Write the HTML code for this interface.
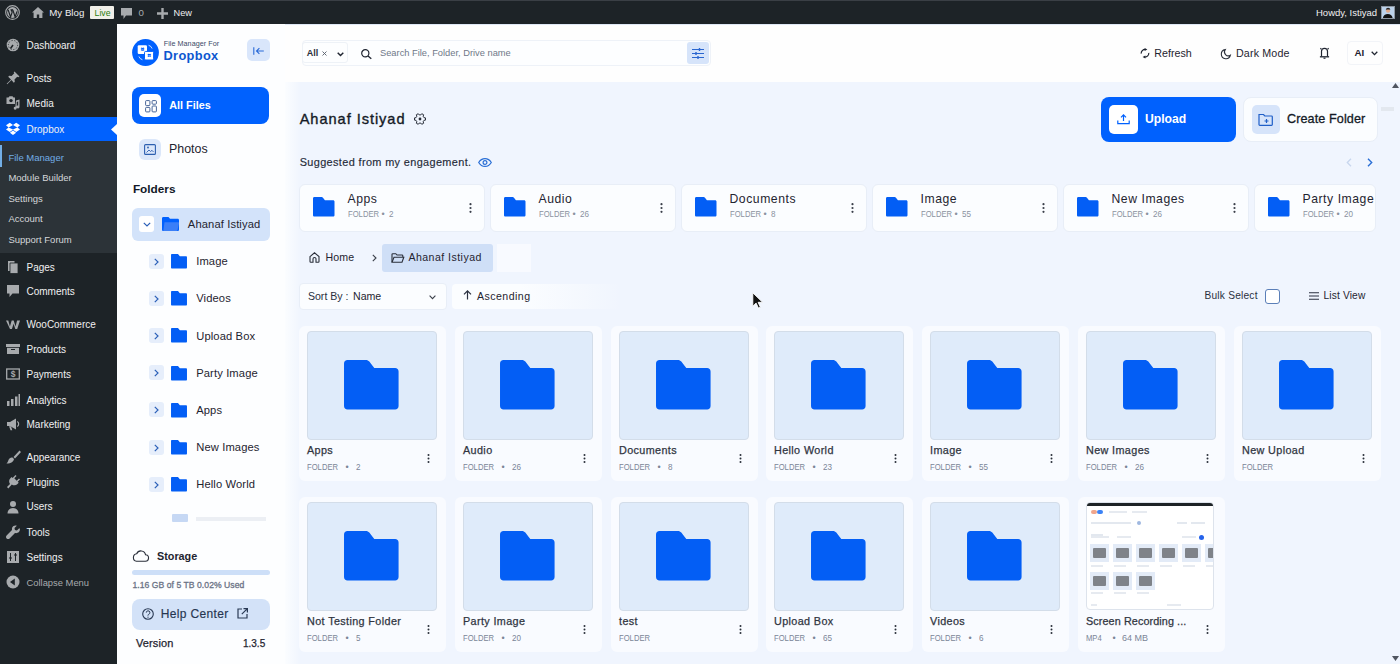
<!DOCTYPE html>
<html><head><meta charset="utf-8"><title>File Manager for Dropbox</title>
<style>
*{box-sizing:border-box;margin:0;padding:0}
html,body{width:1400px;height:664px;overflow:hidden}
body{font-family:"Liberation Sans",sans-serif;background:#eff5fe;position:relative}
.a{position:absolute}
.t{position:absolute;white-space:nowrap}
svg.a{overflow:visible}
</style></head><body>
<div class="a" style="left:0px;top:0px;width:1400px;height:24px;background:#1d2327"></div>
<div class="a" style="left:0px;top:0px;width:1400px;height:1px;background:#3a3f45"></div>
<div class="a" style="left:0px;top:24px;width:117px;height:640px;background:#1d2327"></div>
<div class="a" style="left:117px;top:24px;width:168px;height:640px;background:#fdfeff"></div>
<div class="a" style="left:285px;top:24px;width:1115px;height:58px;background:#fefefe"></div>
<div class="a" style="left:285px;top:82px;width:1115px;height:582px;background:#f0f5fe"></div>
<div class="a" style="left:285px;top:82px;width:16px;height:582px;background:linear-gradient(90deg,#fbfdff,rgba(239,245,254,0))"></div>
<svg class="a" style="left:5px;top:5px;" width="15" height="15" viewBox="0 0 20 20"><circle cx="10" cy="10" r="9.1" fill="none" stroke="#a7aaad" stroke-width="1.5"/><circle cx="10" cy="10" r="7.2" fill="#a7aaad"/><path d="M4.2 6.5l3.2 9.3 2.1-6-1-3.3M7.3 6.5h3.4M10.4 6.5l3.1 9.3 2.6-7.3" fill="none" stroke="#1d2327" stroke-width="1.6"/></svg>
<svg class="a" style="left:32px;top:7px;" width="12" height="11" viewBox="0 0 12 11"><path d="M6 0L0 5.5h1.6V11h3.2V7.5h2.4V11h3.2V5.5H12z" fill="#a7aaad"/></svg>
<div class="t" style="left:49.3px;top:6.82px;font-size:9.7px;line-height:11.64px;color:#f0f0f1;font-weight:400;">My Blog</div>
<div class="a" style="left:90px;top:6px;width:24px;height:13px;background:#f1f0e9;border-radius:1px"></div>
<div class="t" style="left:94.6px;top:7.77px;font-size:8.7px;line-height:10.44px;color:#2b7d10;font-weight:400;">Live</div>
<svg class="a" style="left:121px;top:8px;" width="11" height="11" viewBox="0 0 11 11"><path d="M0 0h11v7.5H5L2.5 11V7.5H0z" fill="#a7aaad"/></svg>
<div class="t" style="left:138.6px;top:6.82px;font-size:9.7px;line-height:11.64px;color:#a7aaad;font-weight:400;">0</div>
<svg class="a" style="left:157px;top:8px;" width="11" height="11" viewBox="0 0 11 11"><path d="M4.3 0h2.4v4.3H11v2.4H6.7V11H4.3V6.7H0V4.3h4.3z" fill="#a7aaad"/></svg>
<div class="t" style="left:173.6px;top:7.89px;font-size:9.2px;line-height:11.04px;color:#f0f0f1;font-weight:400;">New</div>
<div class="t" style="left:1316px;top:7.01px;font-size:9.5px;line-height:11.4px;color:#f0f0f1;font-weight:400;">Howdy, Istiyad</div>
<div class="a" style="left:1381px;top:6px;width:13.5px;height:13px;background:#bcd2ea;border:1px solid #8d96a0"></div>
<svg class="a" style="left:1382px;top:7px;" width="11.5" height="11" viewBox="0 0 12 12"><circle cx="6.3" cy="4" r="2.3" fill="#e0a98a"/><path d="M3.9 3.6c0-2 1.2-2.8 2.5-2.8s2.4.9 2.3 2.6L8 2.6 4.6 2.7z" fill="#222"/><path d="M.7 12c.4-3 2.6-4.3 5.3-4.3s4.9 1.3 5.3 4.3z" fill="#111"/></svg>
<div class="a" style="left:0px;top:117px;width:117px;height:24px;background:#0061fe"></div>
<div class="a" style="left:0px;top:141px;width:117px;height:112px;background:#2c3338"></div>
<div class="a" style="left:0px;top:145px;width:2px;height:22px;background:#72aee6"></div>
<svg class="a" style="left:111px;top:123.5px;" width="6" height="11" viewBox="0 0 6 11"><path d="M6 0L0 5.5 6 11z" fill="#fdfeff"/></svg>
<div class="t" style="left:26.5px;top:39.94px;font-size:10px;line-height:12.0px;color:#f0f0f1;font-weight:400;">Dashboard</div>
<div class="t" style="left:26.5px;top:72.94px;font-size:10px;line-height:12.0px;color:#f0f0f1;font-weight:400;">Posts</div>
<div class="t" style="left:26.5px;top:97.94px;font-size:10px;line-height:12.0px;color:#f0f0f1;font-weight:400;">Media</div>
<div class="t" style="left:26.5px;top:124.44px;font-size:10px;line-height:12.0px;color:#f0f0f1;font-weight:400;">Dropbox</div>
<div class="t" style="left:26.5px;top:261.94px;font-size:10px;line-height:12.0px;color:#f0f0f1;font-weight:400;">Pages</div>
<div class="t" style="left:26.5px;top:285.94px;font-size:10px;line-height:12.0px;color:#f0f0f1;font-weight:400;">Comments</div>
<div class="t" style="left:26.5px;top:318.94px;font-size:10px;line-height:12.0px;color:#f0f0f1;font-weight:400;">WooCommerce</div>
<div class="t" style="left:26.5px;top:343.94px;font-size:10px;line-height:12.0px;color:#f0f0f1;font-weight:400;">Products</div>
<div class="t" style="left:26.5px;top:368.94px;font-size:10px;line-height:12.0px;color:#f0f0f1;font-weight:400;">Payments</div>
<div class="t" style="left:26.5px;top:394.63px;font-size:10px;line-height:12.0px;color:#f0f0f1;font-weight:400;">Analytics</div>
<div class="t" style="left:26.5px;top:418.94px;font-size:10px;line-height:12.0px;color:#f0f0f1;font-weight:400;">Marketing</div>
<div class="t" style="left:26.5px;top:451.94px;font-size:10px;line-height:12.0px;color:#f0f0f1;font-weight:400;">Appearance</div>
<div class="t" style="left:26.5px;top:476.63px;font-size:10px;line-height:12.0px;color:#f0f0f1;font-weight:400;">Plugins</div>
<div class="t" style="left:26.5px;top:501.44px;font-size:10px;line-height:12.0px;color:#f0f0f1;font-weight:400;">Users</div>
<div class="t" style="left:26.5px;top:526.93px;font-size:10px;line-height:12.0px;color:#f0f0f1;font-weight:400;">Tools</div>
<div class="t" style="left:26.5px;top:551.93px;font-size:10px;line-height:12.0px;color:#f0f0f1;font-weight:400;">Settings</div>
<div class="t" style="left:26.5px;top:577.20px;font-size:9.4px;line-height:11.28px;color:#a7aaad;font-weight:400;">Collapse Menu</div>
<div class="t" style="left:8.4px;top:151.91px;font-size:9.5px;line-height:11.4px;color:#72aee6;font-weight:400;">File Manager</div>
<div class="t" style="left:8.4px;top:172.41px;font-size:9.5px;line-height:11.4px;color:#d4d7da;font-weight:400;">Module Builder</div>
<div class="t" style="left:8.4px;top:192.91px;font-size:9.5px;line-height:11.4px;color:#d4d7da;font-weight:400;">Settings</div>
<div class="t" style="left:8.4px;top:212.91px;font-size:9.5px;line-height:11.4px;color:#d4d7da;font-weight:400;">Account</div>
<div class="t" style="left:8.4px;top:233.91px;font-size:9.5px;line-height:11.4px;color:#d4d7da;font-weight:400;">Support Forum</div>
<svg class="a" style="left:6px;top:38px;" width="14" height="14" viewBox="0 0 14 14"><circle cx="7" cy="7" r="6.3" fill="#a7aaad"/><circle cx="7" cy="7" r="4.6" fill="none" stroke="#1d2327" stroke-width=".8" stroke-dasharray="1.2 1.6"/><path d="M7 7L4.5 10.5" stroke="#1d2327" stroke-width="1.5"/></svg>
<svg class="a" style="left:6px;top:71px;" width="14" height="14" viewBox="0 0 14 14"><path d="M8.5 0.5l5 5-1.3.8-1-.6-2.7 2.7.3 2.4-1 1L5.5 9 1.2 13.3.7 12.8 5 8.5 2.2 5.7l1-1 2.4.3 2.7-2.7-.6-1z" fill="#a7aaad"/></svg>
<svg class="a" style="left:6px;top:96px;" width="14" height="14" viewBox="0 0 14 14"><path d="M0.5 1.5h2l1-1.2h3l1 1.2h1.5v6.5H.5z" fill="#a7aaad"/><circle cx="5" cy="4.6" r="1.7" fill="#1d2327"/><path d="M10 4.5l3.5-1v7.5a1.5 1.5 0 1 1-1.3-1.5V5.6l-1.5.4v6.2a1.5 1.5 0 1 1-1.3-1.5z" fill="#a7aaad"/></svg>
<svg class="a" style="left:6px;top:122px;" width="14" height="14" viewBox="0 0 14 14"><path d="M3.8 .8L0 3.3l2.6 2.1L0 7.5l3.8 2.5L7 7.8l3.2 2.2L14 7.5l-2.6-2.1L14 3.3 10.2.8 7 3zM7 3.1l4.3 2.3L7 7.6 2.7 5.4zM3.9 10.7L7 12.9l3.1-2.2L7 8.6z" fill="#fff"/></svg>
<svg class="a" style="left:6px;top:260px;" width="14" height="14" viewBox="0 0 14 14"><path d="M2 1h6.5v10H2z" fill="#a7aaad"/><path d="M4 3h8v10.5H4z" fill="#a7aaad" stroke="#1d2327" stroke-width=".8"/></svg>
<svg class="a" style="left:6px;top:284px;" width="14" height="14" viewBox="0 0 14 14"><path d="M1 1h12v8.5H6.5L3.5 13V9.5H1z" fill="#a7aaad"/></svg>
<svg class="a" style="left:6px;top:317px;" width="14" height="14" viewBox="0 0 14 14"><path d="M0 3.5h2.3l1.6 6 1.8-6h2l1.8 6 1.6-6H14l-2.8 8.5H9.3L7.6 6.8 5.9 12H4z" fill="#a7aaad"/></svg>
<svg class="a" style="left:6px;top:342px;" width="14" height="14" viewBox="0 0 14 14"><path d="M0 2h14v3H0z" fill="#a7aaad"/><path d="M1 5.8h12V12H1z" fill="#a7aaad"/><path d="M5 7.5h4" stroke="#1d2327" stroke-width="1"/></svg>
<svg class="a" style="left:6px;top:367px;" width="14" height="14" viewBox="0 0 14 14"><rect x=".7" y="2" width="12.6" height="10" fill="none" stroke="#a7aaad" stroke-width="1.3"/><text x="7" y="10.3" font-size="8.5" font-weight="bold" text-anchor="middle" fill="#a7aaad" font-family="Liberation Sans">$</text></svg>
<svg class="a" style="left:6px;top:393px;" width="14" height="14" viewBox="0 0 14 14"><path d="M1 8h2.5v5H1zM5 6h2.5v7H5zM9 3.5h2.5V13H9zM12.5 1H14v12h-1.5z" fill="#a7aaad"/></svg>
<svg class="a" style="left:6px;top:417px;" width="14" height="14" viewBox="0 0 14 14"><path d="M1 5h3l6-3.5v11L4 9H1z" fill="#a7aaad"/><path d="M3 9.3l1.5 4h1.8L5 9.3z" fill="#a7aaad"/><path d="M11.3 4.5a3 3 0 0 1 0 5" stroke="#a7aaad" fill="none" stroke-width="1.2"/></svg>
<svg class="a" style="left:6px;top:450px;" width="14" height="14" viewBox="0 0 14 14"><path d="M13.5.5l-6 6.5 1.5 1.5 6-6.5zM6.5 7.5l1.5 1.5c-.5 2.5-2.5 4.5-7.5 4.5 1.5-1 1.5-3 2.5-4.5 1-1.2 2.5-1.5 3.5-1.5z" fill="#a7aaad"/></svg>
<svg class="a" style="left:6px;top:475px;" width="14" height="14" viewBox="0 0 14 14"><path d="M9.5 0l1 1-2.2 2.3 2.4 2.4 2.3-2.2 1 1-2.3 2.3 1 1-1.2 1.2c-1.6 1.6-4 1.7-5.7.4L2.3 13.4 1 12.1l3-3.1C2.7 7.3 2.8 4.9 4.4 3.3L5.6 2.1l1 1z" fill="#a7aaad"/></svg>
<svg class="a" style="left:6px;top:500px;" width="14" height="14" viewBox="0 0 14 14"><circle cx="7" cy="4" r="3" fill="#a7aaad"/><path d="M1.5 13.5c0-3.5 2.5-5.5 5.5-5.5s5.5 2 5.5 5.5z" fill="#a7aaad"/></svg>
<svg class="a" style="left:6px;top:525px;" width="14" height="14" viewBox="0 0 14 14"><path d="M13.2 3.2l-2.3 2.2-2-.4-.4-2L10.8.8C9 0 7 .8 6.2 2.6c-.3.8-.4 1.6-.2 2.4L.6 10.4c-.8.8-.8 2.2 0 3s2.2.8 3 0L9 8c2.7.7 5.3-1.5 4.9-4.3z" fill="#a7aaad"/></svg>
<svg class="a" style="left:6px;top:550px;" width="14" height="14" viewBox="0 0 14 14"><rect x="1" y="1" width="12" height="12" fill="#a7aaad"/><path d="M4.5 3v8M9.5 3v8" stroke="#1d2327" stroke-width="1"/><path d="M3.3 8h2.4M8.3 5h2.4" stroke="#1d2327" stroke-width="1.6"/></svg>
<svg class="a" style="left:6px;top:575px;" width="14" height="14" viewBox="0 0 14 14"><circle cx="7" cy="7" r="6.5" fill="#a7aaad"/><path d="M8.8 3.5v7L4 7z" fill="#1d2327"/></svg>
<svg class="a" style="left:132px;top:39px;" width="27" height="27" viewBox="0 0 27 27"><circle cx="13.5" cy="13.5" r="13.4" fill="#0061fe"/><rect x="5.7" y="6.2" width="9.3" height="8.8" rx="1.2" fill="#fff"/><rect x="12.5" y="12.4" width="9.1" height="8.6" rx="1.2" fill="#fff" stroke="#0061fe" stroke-width="1"/><path d="M8.6 9.3l1.2-.8 1.2.8-1.2.8zM10.2 9.3l1.2-.8 1.2.8-1.2.8zM8.6 10.9l1.2-.8 1.2.8-1.2.8zM10.2 10.9l1.2-.8 1.2.8-1.2.8z" fill="#0061fe"/><path d="M15.3 15.5l1.2-.8 1.2.8-1.2.8zM16.9 15.5l1.2-.8 1.2.8-1.2.8zM15.3 17.1l1.2-.8 1.2.8-1.2.8zM16.9 17.1l1.2-.8 1.2.8-1.2.8z" fill="#0061fe"/><path d="M16.6 6.3a5 5 0 0 1 3.5 3.2M10.4 20.7a5 5 0 0 1-3.5-3.2" stroke="#fff" stroke-width=".8" fill="none"/></svg>
<div class="t" style="left:163.7px;top:39.59px;font-size:7.2px;line-height:8.64px;color:#3b4a66;font-weight:400;letter-spacing:0.05px;">File Manager For</div>
<div class="t" style="left:163.5px;top:48.28px;font-size:12.8px;line-height:15.36px;color:#0d57d0;font-weight:700;letter-spacing:0.35px;">Dropbox</div>
<div class="a" style="left:247px;top:39px;width:23px;height:22px;background:#d9e6fb;border-radius:5px"></div>
<svg class="a" style="left:253px;top:46.5px;" width="11" height="8" viewBox="0 0 11 8"><path d="M.8 .3v7.4" stroke="#2a6ad8" stroke-width="1.1"/><path d="M10.8 4H3.5M6.4 1.1L3.5 4l2.9 2.9" stroke="#2a6ad8" stroke-width="1.1" fill="none"/></svg>
<div class="a" style="left:132px;top:87px;width:137px;height:37px;background:#0061fe;border-radius:8px"></div>
<div class="a" style="left:139px;top:94px;width:22px;height:23px;background:#fff;border-radius:5px"></div>
<svg class="a" style="left:144.5px;top:99.5px;" width="12" height="12.5" viewBox="0 0 12 12.5"><rect x=".6" y=".6" width="4.3" height="5" rx=".8" fill="none" stroke="#34558c" stroke-width=".9"/><rect x="7.1" y=".6" width="4.3" height="3.6" rx=".8" fill="none" stroke="#34558c" stroke-width=".9"/><rect x=".6" y="7.4" width="4.3" height="4.5" rx=".8" fill="none" stroke="#34558c" stroke-width=".9"/><rect x="7.1" y="6" width="4.3" height="5.9" rx=".8" fill="none" stroke="#34558c" stroke-width=".9"/></svg>
<div class="t" style="left:169.3px;top:99.38px;font-size:10.8px;line-height:12.96px;color:#ffffff;font-weight:700;">All Files</div>
<div class="a" style="left:139px;top:139px;width:22px;height:21px;background:#dbe7fa;border-radius:6px"></div>
<svg class="a" style="left:144px;top:144px;" width="12" height="11" viewBox="0 0 12 11"><rect x=".6" y=".6" width="10.8" height="9.8" rx="1" fill="none" stroke="#2c5fb0" stroke-width="1.1"/><path d="M2.5 8.5l2.5-2.5 1.5 1.5 1.5-1.2 1.5 1.7" stroke="#2c5fb0" stroke-width=".9" fill="none"/><circle cx="4" cy="3.5" r=".9" fill="#2c5fb0"/></svg>
<div class="t" style="left:169px;top:141.96px;font-size:12.4px;line-height:14.88px;color:#1f2430;font-weight:400;">Photos</div>
<div class="t" style="left:132.9px;top:181.63px;font-size:11.8px;line-height:14.16px;color:#111827;font-weight:700;">Folders</div>
<div class="a" style="left:132px;top:208px;width:138px;height:33px;background:#d3e3fa;border-radius:6px"></div>
<div class="a" style="left:139px;top:216px;width:15px;height:16px;background:#fff;border-radius:3px"></div>
<svg class="a" style="left:142.5px;top:221.5px;" width="8" height="5" viewBox="0 0 8 5"><path d="M.8 .8L4 4l3.2-3.2" stroke="#2a5fb8" stroke-width="1.2" fill="none"/></svg>
<svg class="a" style="left:161.8px;top:217px;" width="17" height="14" viewBox="0 0 17 14"><path d="M1.3 0H6.5L8 1.8H15.7C16.4 1.8 17 2.4 17 3.1V12.7C17 13.4 16.4 14 15.7 14H1.3C.6 14 0 13.4 0 12.7V1.3C0 .6.6 0 1.3 0Z" fill="#0061fe"/><path d="M2.5 5.3H16.2C16.8 5.3 17.2 5.8 17 6.4L15.5 13.2C15.4 13.7 15 14 14.5 14H1.3" fill="#3b7ff7"/></svg>
<div class="t" style="left:187.8px;top:217.70px;font-size:11.2px;line-height:13.44px;color:#1f2430;font-weight:400;letter-spacing:0.12px;">Ahanaf Istiyad</div>
<div class="a" style="left:148.5px;top:254px;width:15px;height:15px;background:#e6eefb;border-radius:3px"></div>
<svg class="a" style="left:153.5px;top:258px;" width="5" height="8" viewBox="0 0 5 8"><path d="M.8 .8L4 4 .8 7.2" stroke="#2a5fb8" stroke-width="1.2" fill="none"/></svg>
<svg class="a" style="left:171.3px;top:254.0px;" width="16" height="14.5" viewBox="0 0 55 50"><path d="M3.5 0H22C23.5 0 24.5 .6 25.5 1.6L30.5 8H51.5C53.5 8 55 9.5 55 11.5V46.5C55 48.5 53.5 50 51.5 50H3.5C1.5 50 0 48.5 0 46.5V3.5C0 1.5 1.5 0 3.5 0Z" fill="#035ef5"/></svg>
<div class="t" style="left:196.2px;top:255.10px;font-size:11.2px;line-height:13.44px;color:#1f2430;font-weight:400;letter-spacing:0.12px;">Image</div>
<div class="a" style="left:148.5px;top:291px;width:15px;height:15px;background:#e6eefb;border-radius:3px"></div>
<svg class="a" style="left:153.5px;top:295px;" width="5" height="8" viewBox="0 0 5 8"><path d="M.8 .8L4 4 .8 7.2" stroke="#2a5fb8" stroke-width="1.2" fill="none"/></svg>
<svg class="a" style="left:171.3px;top:291.2px;" width="16" height="14.5" viewBox="0 0 55 50"><path d="M3.5 0H22C23.5 0 24.5 .6 25.5 1.6L30.5 8H51.5C53.5 8 55 9.5 55 11.5V46.5C55 48.5 53.5 50 51.5 50H3.5C1.5 50 0 48.5 0 46.5V3.5C0 1.5 1.5 0 3.5 0Z" fill="#035ef5"/></svg>
<div class="t" style="left:196.2px;top:292.30px;font-size:11.2px;line-height:13.44px;color:#1f2430;font-weight:400;letter-spacing:0.12px;">Videos</div>
<div class="a" style="left:148.5px;top:328px;width:15px;height:15px;background:#e6eefb;border-radius:3px"></div>
<svg class="a" style="left:153.5px;top:332px;" width="5" height="8" viewBox="0 0 5 8"><path d="M.8 .8L4 4 .8 7.2" stroke="#2a5fb8" stroke-width="1.2" fill="none"/></svg>
<svg class="a" style="left:171.3px;top:328.4px;" width="16" height="14.5" viewBox="0 0 55 50"><path d="M3.5 0H22C23.5 0 24.5 .6 25.5 1.6L30.5 8H51.5C53.5 8 55 9.5 55 11.5V46.5C55 48.5 53.5 50 51.5 50H3.5C1.5 50 0 48.5 0 46.5V3.5C0 1.5 1.5 0 3.5 0Z" fill="#035ef5"/></svg>
<div class="t" style="left:196.2px;top:329.50px;font-size:11.2px;line-height:13.44px;color:#1f2430;font-weight:400;letter-spacing:0.12px;">Upload Box</div>
<div class="a" style="left:148.5px;top:365px;width:15px;height:15px;background:#e6eefb;border-radius:3px"></div>
<svg class="a" style="left:153.5px;top:369px;" width="5" height="8" viewBox="0 0 5 8"><path d="M.8 .8L4 4 .8 7.2" stroke="#2a5fb8" stroke-width="1.2" fill="none"/></svg>
<svg class="a" style="left:171.3px;top:365.6px;" width="16" height="14.5" viewBox="0 0 55 50"><path d="M3.5 0H22C23.5 0 24.5 .6 25.5 1.6L30.5 8H51.5C53.5 8 55 9.5 55 11.5V46.5C55 48.5 53.5 50 51.5 50H3.5C1.5 50 0 48.5 0 46.5V3.5C0 1.5 1.5 0 3.5 0Z" fill="#035ef5"/></svg>
<div class="t" style="left:196.2px;top:366.70px;font-size:11.2px;line-height:13.44px;color:#1f2430;font-weight:400;letter-spacing:0.12px;">Party Image</div>
<div class="a" style="left:148.5px;top:402px;width:15px;height:15px;background:#e6eefb;border-radius:3px"></div>
<svg class="a" style="left:153.5px;top:406px;" width="5" height="8" viewBox="0 0 5 8"><path d="M.8 .8L4 4 .8 7.2" stroke="#2a5fb8" stroke-width="1.2" fill="none"/></svg>
<svg class="a" style="left:171.3px;top:402.8px;" width="16" height="14.5" viewBox="0 0 55 50"><path d="M3.5 0H22C23.5 0 24.5 .6 25.5 1.6L30.5 8H51.5C53.5 8 55 9.5 55 11.5V46.5C55 48.5 53.5 50 51.5 50H3.5C1.5 50 0 48.5 0 46.5V3.5C0 1.5 1.5 0 3.5 0Z" fill="#035ef5"/></svg>
<div class="t" style="left:196.2px;top:403.90px;font-size:11.2px;line-height:13.44px;color:#1f2430;font-weight:400;letter-spacing:0.12px;">Apps</div>
<div class="a" style="left:148.5px;top:440px;width:15px;height:15px;background:#e6eefb;border-radius:3px"></div>
<svg class="a" style="left:153.5px;top:444px;" width="5" height="8" viewBox="0 0 5 8"><path d="M.8 .8L4 4 .8 7.2" stroke="#2a5fb8" stroke-width="1.2" fill="none"/></svg>
<svg class="a" style="left:171.3px;top:440.0px;" width="16" height="14.5" viewBox="0 0 55 50"><path d="M3.5 0H22C23.5 0 24.5 .6 25.5 1.6L30.5 8H51.5C53.5 8 55 9.5 55 11.5V46.5C55 48.5 53.5 50 51.5 50H3.5C1.5 50 0 48.5 0 46.5V3.5C0 1.5 1.5 0 3.5 0Z" fill="#035ef5"/></svg>
<div class="t" style="left:196.2px;top:441.10px;font-size:11.2px;line-height:13.44px;color:#1f2430;font-weight:400;letter-spacing:0.12px;">New Images</div>
<div class="a" style="left:148.5px;top:477px;width:15px;height:15px;background:#e6eefb;border-radius:3px"></div>
<svg class="a" style="left:153.5px;top:481px;" width="5" height="8" viewBox="0 0 5 8"><path d="M.8 .8L4 4 .8 7.2" stroke="#2a5fb8" stroke-width="1.2" fill="none"/></svg>
<svg class="a" style="left:171.3px;top:477.20000000000005px;" width="16" height="14.5" viewBox="0 0 55 50"><path d="M3.5 0H22C23.5 0 24.5 .6 25.5 1.6L30.5 8H51.5C53.5 8 55 9.5 55 11.5V46.5C55 48.5 53.5 50 51.5 50H3.5C1.5 50 0 48.5 0 46.5V3.5C0 1.5 1.5 0 3.5 0Z" fill="#035ef5"/></svg>
<div class="t" style="left:196.2px;top:478.30px;font-size:11.2px;line-height:13.44px;color:#1f2430;font-weight:400;letter-spacing:0.12px;">Hello World</div>
<div class="a" style="left:172px;top:513.5px;width:16px;height:8.5px;background:#c6d8f4;border-radius:1px"></div>
<div class="a" style="left:196px;top:517px;width:70px;height:4px;background:#eceff4"></div>
<svg class="a" style="left:132px;top:550px;" width="17" height="12" viewBox="0 0 17 12"><path d="M4.5 11.3h8.5a3.3 3.3 0 0 0 .5-6.6 4.6 4.6 0 0 0-8.8-.9A3.8 3.8 0 0 0 4.5 11.3z" fill="none" stroke="#2a2f3a" stroke-width="1.1"/></svg>
<div class="t" style="left:157px;top:550.28px;font-size:10.8px;line-height:12.96px;color:#1f2430;font-weight:700;">Storage</div>
<div class="a" style="left:132px;top:570px;width:138px;height:5px;background:#cddff8;border-radius:3px"></div>
<div class="t" style="left:132.4px;top:579.86px;font-size:8.6px;line-height:10.32px;color:#6b7386;font-weight:400;letter-spacing:0.05px;-webkit-text-stroke:.3px #6b7386;">1.16 GB of 5 TB 0.02% Used</div>
<div class="a" style="left:132px;top:599px;width:138px;height:31px;background:#d3e2f8;border-radius:8px"></div>
<svg class="a" style="left:141.5px;top:608px;" width="12" height="13" viewBox="0 0 12 13"><circle cx="6" cy="6" r="5.3" fill="none" stroke="#2a3a55" stroke-width="1.1"/><path d="M4.3 4.6a1.8 1.8 0 1 1 2.4 1.7c-.5.2-.7.5-.7 1v.4" fill="none" stroke="#2a3a55" stroke-width="1"/><circle cx="6" cy="9.2" r=".6" fill="#2a3a55"/></svg>
<div class="t" style="left:160.8px;top:607.14px;font-size:12px;line-height:14.4px;color:#263550;font-weight:400;letter-spacing:0.35px;-webkit-text-stroke:.15px #263550;">Help Center</div>
<svg class="a" style="left:236.5px;top:608px;" width="11" height="11" viewBox="0 0 11 11"><path d="M5 1H1v9h9V6" fill="none" stroke="#2a3a55" stroke-width="1.2"/><path d="M6.5 .6h3.9v3.9M10.4.6L4.8 6.2" fill="none" stroke="#2a3a55" stroke-width="1.2"/></svg>
<div class="t" style="left:136px;top:636.99px;font-size:11px;line-height:13.2px;color:#1f2430;font-weight:400;letter-spacing:0.1px;-webkit-text-stroke:.25px #1f2430;">Version</div>
<div class="t" style="right:1134.8px;top:637.93px;font-size:10px;line-height:12.0px;color:#1f2430;font-weight:400;-webkit-text-stroke:.25px #1f2430;">1.3.5</div>
<div class="a" style="left:285px;top:24px;width:1115px;height:1px;background:#dfe8f5"></div>
<div class="a" style="left:302px;top:40px;width:409px;height:26px;background:#fdfeff;border:1px solid #eef2f8;border-radius:4px"></div>
<div class="a" style="left:302px;top:42px;width:46px;height:21px;border:1px solid #eef2f7;border-radius:3px"></div>
<div class="t" style="left:306.8px;top:47.68px;font-size:9px;line-height:10.8px;color:#2a2f3a;font-weight:700;">All</div>
<svg class="a" style="left:322px;top:51px;" width="5" height="5" viewBox="0 0 5 5"><path d="M.5.5l4 4M4.5.5l-4 4" stroke="#555c6a" stroke-width=".9"/></svg>
<svg class="a" style="left:337px;top:51.5px;" width="7" height="4.5" viewBox="0 0 7 4.5"><path d="M.7.7L3.5 3.6 6.3.7" stroke="#1f2430" stroke-width="1.4" fill="none"/></svg>
<svg class="a" style="left:361px;top:48.5px;" width="11" height="10" viewBox="0 0 11 10"><circle cx="4.3" cy="4.3" r="3.6" fill="none" stroke="#1f2430" stroke-width="1.2"/><path d="M7 7l3.3 2.8" stroke="#1f2430" stroke-width="1.3"/></svg>
<div class="t" style="left:380px;top:48.20px;font-size:9.3px;line-height:11.16px;color:#6f7888;font-weight:400;">Search File, Folder, Drive name</div>
<div class="a" style="left:687px;top:42px;width:22px;height:22px;background:#d6e4fa;border-radius:3px"></div>
<svg class="a" style="left:692px;top:47.5px;" width="12" height="11" viewBox="0 0 12 11"><path d="M0 1.5h12M0 5.5h12M0 9.5h12" stroke="#2a66d0" stroke-width="1"/><path d="M7.5 0v3M4 4v3M6 8v3" stroke="#2a66d0" stroke-width="1.4"/></svg>
<svg class="a" style="left:1139.5px;top:48px;" width="10" height="10.5" viewBox="0 0 10 10.5"><path d="M1.2 5.6A4 4 0 0 1 5.2 1.3" fill="none" stroke="#1f2430" stroke-width="1.2"/><path d="M4.6 0L7.4 1.4 4.6 2.9z" fill="#1f2430"/><path d="M8.8 4.9A4 4 0 0 1 4.8 9.2" fill="none" stroke="#1f2430" stroke-width="1.2"/><path d="M5.4 10.5L2.6 9.1 5.4 7.6z" fill="#1f2430"/></svg>
<div class="t" style="left:1154.3px;top:46.57px;font-size:10.7px;line-height:12.84px;color:#1f2430;font-weight:400;">Refresh</div>
<svg class="a" style="left:1220.5px;top:48.5px;" width="10" height="10" viewBox="0 0 10 10"><path d="M4.2.6a4.6 4.6 0 1 0 5.2 5.6A3.9 3.9 0 0 1 4.2.6z" fill="none" stroke="#2a2f3a" stroke-width="1.1"/></svg>
<div class="t" style="left:1236px;top:46.57px;font-size:10.7px;line-height:12.84px;color:#1f2430;font-weight:400;letter-spacing:0.15px;">Dark Mode</div>
<svg class="a" style="left:1318.5px;top:47px;" width="11" height="12" viewBox="0 0 11 12"><path d="M2.5 9.5V4.3a3 3 0 0 1 6 0v5.2" fill="none" stroke="#1f2430" stroke-width="1.2"/><path d="M.9 9.8h9.2" stroke="#1f2430" stroke-width="1.3"/><path d="M4.5 11.2h2" stroke="#1f2430" stroke-width="1.2"/><path d="M1.3 2.2l1-1M9.7 2.2l-1-1" stroke="#1f2430" stroke-width="1.1"/></svg>
<div class="t" style="left:1354.5px;top:47.42px;font-size:9.8px;line-height:11.76px;color:#1f2430;font-weight:700;">AI</div>
<div class="a" style="left:1347px;top:41px;width:36px;height:24px;border:1px solid #f2f4f8;border-radius:4px"></div>
<svg class="a" style="left:1371px;top:51px;" width="7" height="4.5" viewBox="0 0 7 4.5"><path d="M.7.7L3.5 3.6 6.3.7" stroke="#1f2430" stroke-width="1.3" fill="none"/></svg>
<svg class="a" style="left:1392px;top:83px;" width="7" height="5" viewBox="0 0 7 5"><path d="M3.5 0L7 5H0z" fill="#505560"/></svg>
<svg class="a" style="left:1392px;top:656px;" width="7" height="5" viewBox="0 0 7 5"><path d="M3.5 5L7 0H0z" fill="#505560"/></svg>
<div class="t" style="left:299.7px;top:110.88px;font-size:14.6px;line-height:17.52px;color:#141a26;font-weight:400;letter-spacing:0.95px;-webkit-text-stroke:.35px #141a26;">Ahanaf Istiyad</div>
<svg class="a" style="left:414px;top:112.8px;" width="12" height="12" viewBox="0 0 12 12"><path d="M9.99 4.68L11.49 4.89L11.49 7.11L9.99 7.32L9.14 8.79L9.71 10.20L7.78 11.31L6.85 10.11L5.15 10.11L4.22 11.31L2.29 10.20L2.86 8.79L2.01 7.32L0.51 7.11L0.51 4.89L2.01 4.68L2.86 3.21L2.29 1.80L4.22 0.69L5.15 1.89L6.85 1.89L7.78 0.69L9.71 1.80L9.14 3.21Z" fill="none" stroke="#2a2f3a" stroke-width="1" stroke-linejoin="round"/><circle cx="6" cy="6" r="1.4" fill="#2a2f3a"/></svg>
<div class="t" style="left:299.7px;top:156.08px;font-size:10.9px;line-height:13.08px;color:#242a38;font-weight:400;letter-spacing:0.37px;-webkit-text-stroke:.15px #242a38;">Suggested from my engagement.</div>
<svg class="a" style="left:478px;top:157.6px;" width="14" height="9" viewBox="0 0 14 9"><path d="M.7 4.5C2.3 1.8 4.5.6 7 .6s4.7 1.2 6.3 3.9C11.7 7.2 9.5 8.4 7 8.4S2.3 7.2.7 4.5z" fill="none" stroke="#2a6fd6" stroke-width="1.2"/><circle cx="7" cy="4.5" r="1.9" fill="none" stroke="#2a6fd6" stroke-width="1.2"/></svg>
<svg class="a" style="left:1346px;top:158px;" width="6" height="9" viewBox="0 0 6 9"><path d="M5 .8L1.3 4.5 5 8.2" stroke="#c8d6ee" stroke-width="1.3" fill="none"/></svg>
<svg class="a" style="left:1367px;top:158px;" width="6" height="9" viewBox="0 0 6 9"><path d="M1 .8l3.7 3.7L1 8.2" stroke="#2a6fd6" stroke-width="1.4" fill="none"/></svg>
<div class="a" style="left:1101px;top:97px;width:135px;height:45px;background:#0061fe;border-radius:8px"></div>
<div class="a" style="left:1109px;top:105px;width:29px;height:29px;background:#fff;border-radius:5px"></div>
<svg class="a" style="left:1117px;top:114px;" width="13" height="10.5" viewBox="0 0 13 10.5"><path d="M6.5 7V.9M4 3.3L6.5.8 9 3.3" fill="none" stroke="#0061fe" stroke-width="1.2"/><path d="M.8 6.5v3.2h11.4V6.5" fill="none" stroke="#0061fe" stroke-width="1.2"/></svg>
<div class="t" style="left:1144.9px;top:111.85px;font-size:12.2px;line-height:14.64px;color:#ffffff;font-weight:700;">Upload</div>
<div class="a" style="left:1243px;top:97px;width:135px;height:45px;background:#fbfdff;border:1px solid #e8eef7;border-radius:8px"></div>
<div class="a" style="left:1381px;top:107px;width:13px;height:4px;background:#e3e8ef"></div>
<div class="a" style="left:1252px;top:105px;width:28px;height:29px;background:#d6e4fa;border-radius:5px"></div>
<svg class="a" style="left:1258px;top:113px;" width="15" height="13" viewBox="0 0 15 13"><path d="M1 1.5h4.5l1.3 1.5h6.7c.4 0 .8.4.8.8v7.7c0 .4-.4.8-.8.8H1.8c-.4 0-.8-.4-.8-.8z" fill="none" stroke="#1f5fc8" stroke-width="1.2"/><path d="M8.5 6v4M6.5 8h4" stroke="#1f5fc8" stroke-width="1.2"/></svg>
<div class="t" style="left:1287px;top:112.17px;font-size:12.6px;line-height:15.12px;color:#141a26;font-weight:400;letter-spacing:0.1px;-webkit-text-stroke:.3px #141a26;">Create Folder</div>
<div class="a" style="left:299px;top:184px;width:186px;height:48px;background:#fbfdff;border:1px solid #e8eef7;border-radius:6px"></div>
<svg class="a" style="left:312.5px;top:197.2px;" width="21.5" height="19.7" viewBox="0 0 55 50"><path d="M3.5 0H22C23.5 0 24.5 .6 25.5 1.6L30.5 8H51.5C53.5 8 55 9.5 55 11.5V46.5C55 48.5 53.5 50 51.5 50H3.5C1.5 50 0 48.5 0 46.5V3.5C0 1.5 1.5 0 3.5 0Z" fill="#035ef5"/></svg>
<div class="t" style="left:347.5px;top:192.15px;font-size:12.2px;line-height:14.64px;color:#1f2430;font-weight:400;letter-spacing:0.55px;">Apps</div>
<div class="t" style="left:347.5px;top:208.88px;font-size:9px;line-height:10.8px;color:#8a92a0;font-weight:400;transform:scaleX(.85);transform-origin:0 0;">FOLDER</div>
<div class="t" style="left:381.5px;top:208.88px;font-size:9px;line-height:10.8px;color:#8a92a0;font-weight:400;">•</div>
<div class="t" style="left:389px;top:208.88px;font-size:9px;line-height:10.8px;color:#8a92a0;font-weight:400;transform:scaleX(.9);transform-origin:0 0;">2</div>
<svg class="a" style="left:469px;top:203px;" width="3" height="10" viewBox="0 0 3 10"><circle cx="1.5" cy="1.2" r="1.1" fill="#3a3f4a"/><circle cx="1.5" cy="5" r="1.1" fill="#3a3f4a"/><circle cx="1.5" cy="8.8" r="1.1" fill="#3a3f4a"/></svg>
<div class="a" style="left:490px;top:184px;width:186px;height:48px;background:#fbfdff;border:1px solid #e8eef7;border-radius:6px"></div>
<svg class="a" style="left:503.5px;top:197.2px;" width="21.5" height="19.7" viewBox="0 0 55 50"><path d="M3.5 0H22C23.5 0 24.5 .6 25.5 1.6L30.5 8H51.5C53.5 8 55 9.5 55 11.5V46.5C55 48.5 53.5 50 51.5 50H3.5C1.5 50 0 48.5 0 46.5V3.5C0 1.5 1.5 0 3.5 0Z" fill="#035ef5"/></svg>
<div class="t" style="left:538.5px;top:192.15px;font-size:12.2px;line-height:14.64px;color:#1f2430;font-weight:400;letter-spacing:0.55px;">Audio</div>
<div class="t" style="left:538.5px;top:208.88px;font-size:9px;line-height:10.8px;color:#8a92a0;font-weight:400;transform:scaleX(.85);transform-origin:0 0;">FOLDER</div>
<div class="t" style="left:572.5px;top:208.88px;font-size:9px;line-height:10.8px;color:#8a92a0;font-weight:400;">•</div>
<div class="t" style="left:580px;top:208.88px;font-size:9px;line-height:10.8px;color:#8a92a0;font-weight:400;transform:scaleX(.9);transform-origin:0 0;">26</div>
<svg class="a" style="left:660px;top:203px;" width="3" height="10" viewBox="0 0 3 10"><circle cx="1.5" cy="1.2" r="1.1" fill="#3a3f4a"/><circle cx="1.5" cy="5" r="1.1" fill="#3a3f4a"/><circle cx="1.5" cy="8.8" r="1.1" fill="#3a3f4a"/></svg>
<div class="a" style="left:681px;top:184px;width:186px;height:48px;background:#fbfdff;border:1px solid #e8eef7;border-radius:6px"></div>
<svg class="a" style="left:694.5px;top:197.2px;" width="21.5" height="19.7" viewBox="0 0 55 50"><path d="M3.5 0H22C23.5 0 24.5 .6 25.5 1.6L30.5 8H51.5C53.5 8 55 9.5 55 11.5V46.5C55 48.5 53.5 50 51.5 50H3.5C1.5 50 0 48.5 0 46.5V3.5C0 1.5 1.5 0 3.5 0Z" fill="#035ef5"/></svg>
<div class="t" style="left:729.5px;top:192.15px;font-size:12.2px;line-height:14.64px;color:#1f2430;font-weight:400;letter-spacing:0.55px;">Documents</div>
<div class="t" style="left:729.5px;top:208.88px;font-size:9px;line-height:10.8px;color:#8a92a0;font-weight:400;transform:scaleX(.85);transform-origin:0 0;">FOLDER</div>
<div class="t" style="left:763.5px;top:208.88px;font-size:9px;line-height:10.8px;color:#8a92a0;font-weight:400;">•</div>
<div class="t" style="left:771px;top:208.88px;font-size:9px;line-height:10.8px;color:#8a92a0;font-weight:400;transform:scaleX(.9);transform-origin:0 0;">8</div>
<svg class="a" style="left:851px;top:203px;" width="3" height="10" viewBox="0 0 3 10"><circle cx="1.5" cy="1.2" r="1.1" fill="#3a3f4a"/><circle cx="1.5" cy="5" r="1.1" fill="#3a3f4a"/><circle cx="1.5" cy="8.8" r="1.1" fill="#3a3f4a"/></svg>
<div class="a" style="left:872px;top:184px;width:186px;height:48px;background:#fbfdff;border:1px solid #e8eef7;border-radius:6px"></div>
<svg class="a" style="left:885.5px;top:197.2px;" width="21.5" height="19.7" viewBox="0 0 55 50"><path d="M3.5 0H22C23.5 0 24.5 .6 25.5 1.6L30.5 8H51.5C53.5 8 55 9.5 55 11.5V46.5C55 48.5 53.5 50 51.5 50H3.5C1.5 50 0 48.5 0 46.5V3.5C0 1.5 1.5 0 3.5 0Z" fill="#035ef5"/></svg>
<div class="t" style="left:920.5px;top:192.15px;font-size:12.2px;line-height:14.64px;color:#1f2430;font-weight:400;letter-spacing:0.55px;">Image</div>
<div class="t" style="left:920.5px;top:208.88px;font-size:9px;line-height:10.8px;color:#8a92a0;font-weight:400;transform:scaleX(.85);transform-origin:0 0;">FOLDER</div>
<div class="t" style="left:954.5px;top:208.88px;font-size:9px;line-height:10.8px;color:#8a92a0;font-weight:400;">•</div>
<div class="t" style="left:962px;top:208.88px;font-size:9px;line-height:10.8px;color:#8a92a0;font-weight:400;transform:scaleX(.9);transform-origin:0 0;">55</div>
<svg class="a" style="left:1042px;top:203px;" width="3" height="10" viewBox="0 0 3 10"><circle cx="1.5" cy="1.2" r="1.1" fill="#3a3f4a"/><circle cx="1.5" cy="5" r="1.1" fill="#3a3f4a"/><circle cx="1.5" cy="8.8" r="1.1" fill="#3a3f4a"/></svg>
<div class="a" style="left:1063px;top:184px;width:186px;height:48px;background:#fbfdff;border:1px solid #e8eef7;border-radius:6px"></div>
<svg class="a" style="left:1076.5px;top:197.2px;" width="21.5" height="19.7" viewBox="0 0 55 50"><path d="M3.5 0H22C23.5 0 24.5 .6 25.5 1.6L30.5 8H51.5C53.5 8 55 9.5 55 11.5V46.5C55 48.5 53.5 50 51.5 50H3.5C1.5 50 0 48.5 0 46.5V3.5C0 1.5 1.5 0 3.5 0Z" fill="#035ef5"/></svg>
<div class="t" style="left:1111.5px;top:192.15px;font-size:12.2px;line-height:14.64px;color:#1f2430;font-weight:400;letter-spacing:0.55px;">New Images</div>
<div class="t" style="left:1111.5px;top:208.88px;font-size:9px;line-height:10.8px;color:#8a92a0;font-weight:400;transform:scaleX(.85);transform-origin:0 0;">FOLDER</div>
<div class="t" style="left:1145.5px;top:208.88px;font-size:9px;line-height:10.8px;color:#8a92a0;font-weight:400;">•</div>
<div class="t" style="left:1153px;top:208.88px;font-size:9px;line-height:10.8px;color:#8a92a0;font-weight:400;transform:scaleX(.9);transform-origin:0 0;">26</div>
<svg class="a" style="left:1233px;top:203px;" width="3" height="10" viewBox="0 0 3 10"><circle cx="1.5" cy="1.2" r="1.1" fill="#3a3f4a"/><circle cx="1.5" cy="5" r="1.1" fill="#3a3f4a"/><circle cx="1.5" cy="8.8" r="1.1" fill="#3a3f4a"/></svg>
<div class="a" style="left:1254px;top:184px;width:122px;height:48px;background:#fbfdff;border:1px solid #e8eef7;border-radius:6px"></div>
<svg class="a" style="left:1267.5px;top:197.2px;" width="21.5" height="19.7" viewBox="0 0 55 50"><path d="M3.5 0H22C23.5 0 24.5 .6 25.5 1.6L30.5 8H51.5C53.5 8 55 9.5 55 11.5V46.5C55 48.5 53.5 50 51.5 50H3.5C1.5 50 0 48.5 0 46.5V3.5C0 1.5 1.5 0 3.5 0Z" fill="#035ef5"/></svg>
<div class="t" style="left:1302.5px;top:192.15px;font-size:12.2px;line-height:14.64px;color:#1f2430;font-weight:400;letter-spacing:0.55px;">Party Image</div>
<div class="t" style="left:1302.5px;top:208.88px;font-size:9px;line-height:10.8px;color:#8a92a0;font-weight:400;transform:scaleX(.85);transform-origin:0 0;">FOLDER</div>
<div class="t" style="left:1336.5px;top:208.88px;font-size:9px;line-height:10.8px;color:#8a92a0;font-weight:400;">•</div>
<div class="t" style="left:1344px;top:208.88px;font-size:9px;line-height:10.8px;color:#8a92a0;font-weight:400;transform:scaleX(.9);transform-origin:0 0;">20</div>
<svg class="a" style="left:309px;top:252px;" width="11" height="11" viewBox="0 0 11 11"><path d="M1 4.6L5.5.8 10 4.6V9.6c0 .4-.3.7-.7.7H7V7a1.5 1.5 0 0 0-3 0v3.3H1.7c-.4 0-.7-.3-.7-.7z" fill="none" stroke="#2a2f3a" stroke-width="1.1"/></svg>
<div class="t" style="left:325.4px;top:251.17px;font-size:10.6px;line-height:12.72px;color:#1f2430;font-weight:400;letter-spacing:0.2px;">Home</div>
<svg class="a" style="left:372px;top:254px;" width="5" height="8" viewBox="0 0 5 8"><path d="M.8.8L4 4 .8 7.2" stroke="#3a3f4a" stroke-width="1.1" fill="none"/></svg>
<div class="a" style="left:382px;top:244px;width:111px;height:28px;background:#cfdff7;border-radius:3px"></div>
<div class="a" style="left:497px;top:244px;width:34px;height:28px;background:rgba(255,255,255,.5)"></div>
<svg class="a" style="left:390.5px;top:253px;" width="13.5" height="10" viewBox="0 0 13.5 10"><path d="M1 9V1.5c0-.4.3-.8.8-.8h3l1.2 1.3h5c.4 0 .8.3.8.8V4" fill="none" stroke="#2a2f3a" stroke-width="1.1"/><path d="M1 9.3L3 4.2h9.8L11 9.3z" fill="none" stroke="#2a2f3a" stroke-width="1.1"/></svg>
<div class="t" style="left:408.4px;top:251.17px;font-size:10.6px;line-height:12.72px;color:#1f2430;font-weight:400;letter-spacing:0.45px;">Ahanaf Istiyad</div>
<div class="a" style="left:299px;top:283px;width:148px;height:27px;background:#fbfdff;border:1px solid #e8eef7;border-radius:4px"></div>
<div class="t" style="left:307.9px;top:289.57px;font-size:10.6px;line-height:12.72px;color:#2a3040;font-weight:400;">Sort By :</div>
<div class="t" style="left:353px;top:289.57px;font-size:10.6px;line-height:12.72px;color:#1f2430;font-weight:400;">Name</div>
<svg class="a" style="left:429px;top:294.5px;" width="7" height="4.5" viewBox="0 0 7 4.5"><path d="M.6.6L3.5 3.6 6.4.6" stroke="#3a3f4a" stroke-width="1.1" fill="none"/></svg>
<div class="a" style="left:452px;top:284px;width:170px;height:25px;background:linear-gradient(90deg,#fbfdff 40%,rgba(251,253,255,0));border-radius:4px"></div>
<svg class="a" style="left:462.5px;top:290px;" width="9" height="10" viewBox="0 0 9 10"><path d="M4.5 9.5V1M1 4.3L4.5.8 8 4.3" stroke="#2a3040" stroke-width="1.2" fill="none"/></svg>
<div class="t" style="left:477px;top:289.57px;font-size:10.6px;line-height:12.72px;color:#1f2430;font-weight:400;letter-spacing:0.45px;">Ascending</div>
<div class="t" style="left:1204.5px;top:290.35px;font-size:10.2px;line-height:12.24px;color:#2a3040;font-weight:400;letter-spacing:0.2px;">Bulk Select</div>
<div class="a" style="left:1265px;top:289px;width:15px;height:15px;background:#fff;border:1.3px solid #5b7fb8;border-radius:3px"></div>
<svg class="a" style="left:1308.5px;top:292px;" width="10" height="8" viewBox="0 0 10 8"><path d="M0 .7h10M0 4h10M0 7.3h10" stroke="#2a3040" stroke-width="1.1"/></svg>
<div class="t" style="left:1323.5px;top:290.35px;font-size:10.2px;line-height:12.24px;color:#1f2430;font-weight:400;letter-spacing:0.15px;">List View</div>
<div class="a" style="left:299px;top:326px;width:147px;height:155px;background:#f9fbff;border-radius:6px"></div>
<div class="a" style="left:307px;top:331px;width:130px;height:109px;background:#dfebfa;border:1px solid #d3dde9;border-radius:4px"></div>
<svg class="a" style="left:343.5px;top:360.3px;" width="54.6" height="49.6" viewBox="0 0 55 50"><path d="M3.5 0H22C23.5 0 24.5 .6 25.5 1.6L30.5 8H51.5C53.5 8 55 9.5 55 11.5V46.5C55 48.5 53.5 50 51.5 50H3.5C1.5 50 0 48.5 0 46.5V3.5C0 1.5 1.5 0 3.5 0Z" fill="#035ef5"/></svg>
<div class="t" style="left:307px;top:444.08px;font-size:10.8px;line-height:12.96px;color:#30353f;font-weight:400;letter-spacing:0.38px;-webkit-text-stroke:.25px #30353f;">Apps</div>
<div class="t" style="left:307px;top:461.68px;font-size:9px;line-height:10.8px;color:#7b8597;font-weight:400;transform:scaleX(.85);transform-origin:0 0;">FOLDER</div>
<div class="t" style="left:345.5px;top:461.68px;font-size:9px;line-height:10.8px;color:#7b8597;font-weight:400;">•</div>
<div class="t" style="left:356.3px;top:461.68px;font-size:9px;line-height:10.8px;color:#7b8597;font-weight:400;transform:scaleX(.9);transform-origin:0 0;">2</div>
<svg class="a" style="left:427px;top:454px;" width="3" height="9" viewBox="0 0 3 9"><circle cx="1.5" cy="1" r="1" fill="#2a2f3a"/><circle cx="1.5" cy="4.5" r="1" fill="#2a2f3a"/><circle cx="1.5" cy="8" r="1" fill="#2a2f3a"/></svg>
<div class="a" style="left:455px;top:326px;width:147px;height:155px;background:#f9fbff;border-radius:6px"></div>
<div class="a" style="left:463px;top:331px;width:130px;height:109px;background:#dfebfa;border:1px solid #d3dde9;border-radius:4px"></div>
<svg class="a" style="left:499.5px;top:360.3px;" width="54.6" height="49.6" viewBox="0 0 55 50"><path d="M3.5 0H22C23.5 0 24.5 .6 25.5 1.6L30.5 8H51.5C53.5 8 55 9.5 55 11.5V46.5C55 48.5 53.5 50 51.5 50H3.5C1.5 50 0 48.5 0 46.5V3.5C0 1.5 1.5 0 3.5 0Z" fill="#035ef5"/></svg>
<div class="t" style="left:463px;top:444.08px;font-size:10.8px;line-height:12.96px;color:#30353f;font-weight:400;letter-spacing:0.38px;-webkit-text-stroke:.25px #30353f;">Audio</div>
<div class="t" style="left:463px;top:461.68px;font-size:9px;line-height:10.8px;color:#7b8597;font-weight:400;transform:scaleX(.85);transform-origin:0 0;">FOLDER</div>
<div class="t" style="left:501.5px;top:461.68px;font-size:9px;line-height:10.8px;color:#7b8597;font-weight:400;">•</div>
<div class="t" style="left:512.3px;top:461.68px;font-size:9px;line-height:10.8px;color:#7b8597;font-weight:400;transform:scaleX(.9);transform-origin:0 0;">26</div>
<svg class="a" style="left:583px;top:454px;" width="3" height="9" viewBox="0 0 3 9"><circle cx="1.5" cy="1" r="1" fill="#2a2f3a"/><circle cx="1.5" cy="4.5" r="1" fill="#2a2f3a"/><circle cx="1.5" cy="8" r="1" fill="#2a2f3a"/></svg>
<div class="a" style="left:611px;top:326px;width:147px;height:155px;background:#f9fbff;border-radius:6px"></div>
<div class="a" style="left:619px;top:331px;width:130px;height:109px;background:#dfebfa;border:1px solid #d3dde9;border-radius:4px"></div>
<svg class="a" style="left:655.5px;top:360.3px;" width="54.6" height="49.6" viewBox="0 0 55 50"><path d="M3.5 0H22C23.5 0 24.5 .6 25.5 1.6L30.5 8H51.5C53.5 8 55 9.5 55 11.5V46.5C55 48.5 53.5 50 51.5 50H3.5C1.5 50 0 48.5 0 46.5V3.5C0 1.5 1.5 0 3.5 0Z" fill="#035ef5"/></svg>
<div class="t" style="left:619px;top:444.08px;font-size:10.8px;line-height:12.96px;color:#30353f;font-weight:400;letter-spacing:0.38px;-webkit-text-stroke:.25px #30353f;">Documents</div>
<div class="t" style="left:619px;top:461.68px;font-size:9px;line-height:10.8px;color:#7b8597;font-weight:400;transform:scaleX(.85);transform-origin:0 0;">FOLDER</div>
<div class="t" style="left:657.5px;top:461.68px;font-size:9px;line-height:10.8px;color:#7b8597;font-weight:400;">•</div>
<div class="t" style="left:668.3px;top:461.68px;font-size:9px;line-height:10.8px;color:#7b8597;font-weight:400;transform:scaleX(.9);transform-origin:0 0;">8</div>
<svg class="a" style="left:739px;top:454px;" width="3" height="9" viewBox="0 0 3 9"><circle cx="1.5" cy="1" r="1" fill="#2a2f3a"/><circle cx="1.5" cy="4.5" r="1" fill="#2a2f3a"/><circle cx="1.5" cy="8" r="1" fill="#2a2f3a"/></svg>
<div class="a" style="left:766px;top:326px;width:147px;height:155px;background:#f9fbff;border-radius:6px"></div>
<div class="a" style="left:774px;top:331px;width:130px;height:109px;background:#dfebfa;border:1px solid #d3dde9;border-radius:4px"></div>
<svg class="a" style="left:810.5px;top:360.3px;" width="54.6" height="49.6" viewBox="0 0 55 50"><path d="M3.5 0H22C23.5 0 24.5 .6 25.5 1.6L30.5 8H51.5C53.5 8 55 9.5 55 11.5V46.5C55 48.5 53.5 50 51.5 50H3.5C1.5 50 0 48.5 0 46.5V3.5C0 1.5 1.5 0 3.5 0Z" fill="#035ef5"/></svg>
<div class="t" style="left:774px;top:444.08px;font-size:10.8px;line-height:12.96px;color:#30353f;font-weight:400;letter-spacing:0.38px;-webkit-text-stroke:.25px #30353f;">Hello World</div>
<div class="t" style="left:774px;top:461.68px;font-size:9px;line-height:10.8px;color:#7b8597;font-weight:400;transform:scaleX(.85);transform-origin:0 0;">FOLDER</div>
<div class="t" style="left:812.5px;top:461.68px;font-size:9px;line-height:10.8px;color:#7b8597;font-weight:400;">•</div>
<div class="t" style="left:823.3px;top:461.68px;font-size:9px;line-height:10.8px;color:#7b8597;font-weight:400;transform:scaleX(.9);transform-origin:0 0;">23</div>
<svg class="a" style="left:894px;top:454px;" width="3" height="9" viewBox="0 0 3 9"><circle cx="1.5" cy="1" r="1" fill="#2a2f3a"/><circle cx="1.5" cy="4.5" r="1" fill="#2a2f3a"/><circle cx="1.5" cy="8" r="1" fill="#2a2f3a"/></svg>
<div class="a" style="left:922px;top:326px;width:147px;height:155px;background:#f9fbff;border-radius:6px"></div>
<div class="a" style="left:930px;top:331px;width:130px;height:109px;background:#dfebfa;border:1px solid #d3dde9;border-radius:4px"></div>
<svg class="a" style="left:966.5px;top:360.3px;" width="54.6" height="49.6" viewBox="0 0 55 50"><path d="M3.5 0H22C23.5 0 24.5 .6 25.5 1.6L30.5 8H51.5C53.5 8 55 9.5 55 11.5V46.5C55 48.5 53.5 50 51.5 50H3.5C1.5 50 0 48.5 0 46.5V3.5C0 1.5 1.5 0 3.5 0Z" fill="#035ef5"/></svg>
<div class="t" style="left:930px;top:444.08px;font-size:10.8px;line-height:12.96px;color:#30353f;font-weight:400;letter-spacing:0.38px;-webkit-text-stroke:.25px #30353f;">Image</div>
<div class="t" style="left:930px;top:461.68px;font-size:9px;line-height:10.8px;color:#7b8597;font-weight:400;transform:scaleX(.85);transform-origin:0 0;">FOLDER</div>
<div class="t" style="left:968.5px;top:461.68px;font-size:9px;line-height:10.8px;color:#7b8597;font-weight:400;">•</div>
<div class="t" style="left:979.3px;top:461.68px;font-size:9px;line-height:10.8px;color:#7b8597;font-weight:400;transform:scaleX(.9);transform-origin:0 0;">55</div>
<svg class="a" style="left:1050px;top:454px;" width="3" height="9" viewBox="0 0 3 9"><circle cx="1.5" cy="1" r="1" fill="#2a2f3a"/><circle cx="1.5" cy="4.5" r="1" fill="#2a2f3a"/><circle cx="1.5" cy="8" r="1" fill="#2a2f3a"/></svg>
<div class="a" style="left:1078px;top:326px;width:147px;height:155px;background:#f9fbff;border-radius:6px"></div>
<div class="a" style="left:1086px;top:331px;width:130px;height:109px;background:#dfebfa;border:1px solid #d3dde9;border-radius:4px"></div>
<svg class="a" style="left:1122.5px;top:360.3px;" width="54.6" height="49.6" viewBox="0 0 55 50"><path d="M3.5 0H22C23.5 0 24.5 .6 25.5 1.6L30.5 8H51.5C53.5 8 55 9.5 55 11.5V46.5C55 48.5 53.5 50 51.5 50H3.5C1.5 50 0 48.5 0 46.5V3.5C0 1.5 1.5 0 3.5 0Z" fill="#035ef5"/></svg>
<div class="t" style="left:1086px;top:444.08px;font-size:10.8px;line-height:12.96px;color:#30353f;font-weight:400;letter-spacing:0.38px;-webkit-text-stroke:.25px #30353f;">New Images</div>
<div class="t" style="left:1086px;top:461.68px;font-size:9px;line-height:10.8px;color:#7b8597;font-weight:400;transform:scaleX(.85);transform-origin:0 0;">FOLDER</div>
<div class="t" style="left:1124.5px;top:461.68px;font-size:9px;line-height:10.8px;color:#7b8597;font-weight:400;">•</div>
<div class="t" style="left:1135.3px;top:461.68px;font-size:9px;line-height:10.8px;color:#7b8597;font-weight:400;transform:scaleX(.9);transform-origin:0 0;">26</div>
<svg class="a" style="left:1206px;top:454px;" width="3" height="9" viewBox="0 0 3 9"><circle cx="1.5" cy="1" r="1" fill="#2a2f3a"/><circle cx="1.5" cy="4.5" r="1" fill="#2a2f3a"/><circle cx="1.5" cy="8" r="1" fill="#2a2f3a"/></svg>
<div class="a" style="left:1234px;top:326px;width:147px;height:155px;background:#f9fbff;border-radius:6px"></div>
<div class="a" style="left:1242px;top:331px;width:130px;height:109px;background:#dfebfa;border:1px solid #d3dde9;border-radius:4px"></div>
<svg class="a" style="left:1278.5px;top:360.3px;" width="54.6" height="49.6" viewBox="0 0 55 50"><path d="M3.5 0H22C23.5 0 24.5 .6 25.5 1.6L30.5 8H51.5C53.5 8 55 9.5 55 11.5V46.5C55 48.5 53.5 50 51.5 50H3.5C1.5 50 0 48.5 0 46.5V3.5C0 1.5 1.5 0 3.5 0Z" fill="#035ef5"/></svg>
<div class="t" style="left:1242px;top:444.08px;font-size:10.8px;line-height:12.96px;color:#30353f;font-weight:400;letter-spacing:0.38px;-webkit-text-stroke:.25px #30353f;">New Upload</div>
<div class="t" style="left:1242px;top:461.68px;font-size:9px;line-height:10.8px;color:#7b8597;font-weight:400;transform:scaleX(.85);transform-origin:0 0;">FOLDER</div>
<svg class="a" style="left:1362px;top:454px;" width="3" height="9" viewBox="0 0 3 9"><circle cx="1.5" cy="1" r="1" fill="#2a2f3a"/><circle cx="1.5" cy="4.5" r="1" fill="#2a2f3a"/><circle cx="1.5" cy="8" r="1" fill="#2a2f3a"/></svg>
<div class="a" style="left:299px;top:497px;width:147px;height:155px;background:#f9fbff;border-radius:6px"></div>
<div class="a" style="left:307px;top:502px;width:130px;height:109px;background:#dfebfa;border:1px solid #d3dde9;border-radius:4px"></div>
<svg class="a" style="left:343.5px;top:531.3px;" width="54.6" height="49.6" viewBox="0 0 55 50"><path d="M3.5 0H22C23.5 0 24.5 .6 25.5 1.6L30.5 8H51.5C53.5 8 55 9.5 55 11.5V46.5C55 48.5 53.5 50 51.5 50H3.5C1.5 50 0 48.5 0 46.5V3.5C0 1.5 1.5 0 3.5 0Z" fill="#035ef5"/></svg>
<div class="t" style="left:307px;top:615.08px;font-size:10.8px;line-height:12.96px;color:#30353f;font-weight:400;letter-spacing:0.38px;-webkit-text-stroke:.25px #30353f;">Not Testing Folder</div>
<div class="t" style="left:307px;top:632.68px;font-size:9px;line-height:10.8px;color:#7b8597;font-weight:400;transform:scaleX(.85);transform-origin:0 0;">FOLDER</div>
<div class="t" style="left:345.5px;top:632.68px;font-size:9px;line-height:10.8px;color:#7b8597;font-weight:400;">•</div>
<div class="t" style="left:356.3px;top:632.68px;font-size:9px;line-height:10.8px;color:#7b8597;font-weight:400;transform:scaleX(.9);transform-origin:0 0;">5</div>
<svg class="a" style="left:427px;top:625px;" width="3" height="9" viewBox="0 0 3 9"><circle cx="1.5" cy="1" r="1" fill="#2a2f3a"/><circle cx="1.5" cy="4.5" r="1" fill="#2a2f3a"/><circle cx="1.5" cy="8" r="1" fill="#2a2f3a"/></svg>
<div class="a" style="left:455px;top:497px;width:147px;height:155px;background:#f9fbff;border-radius:6px"></div>
<div class="a" style="left:463px;top:502px;width:130px;height:109px;background:#dfebfa;border:1px solid #d3dde9;border-radius:4px"></div>
<svg class="a" style="left:499.5px;top:531.3px;" width="54.6" height="49.6" viewBox="0 0 55 50"><path d="M3.5 0H22C23.5 0 24.5 .6 25.5 1.6L30.5 8H51.5C53.5 8 55 9.5 55 11.5V46.5C55 48.5 53.5 50 51.5 50H3.5C1.5 50 0 48.5 0 46.5V3.5C0 1.5 1.5 0 3.5 0Z" fill="#035ef5"/></svg>
<div class="t" style="left:463px;top:615.08px;font-size:10.8px;line-height:12.96px;color:#30353f;font-weight:400;letter-spacing:0.38px;-webkit-text-stroke:.25px #30353f;">Party Image</div>
<div class="t" style="left:463px;top:632.68px;font-size:9px;line-height:10.8px;color:#7b8597;font-weight:400;transform:scaleX(.85);transform-origin:0 0;">FOLDER</div>
<div class="t" style="left:501.5px;top:632.68px;font-size:9px;line-height:10.8px;color:#7b8597;font-weight:400;">•</div>
<div class="t" style="left:512.3px;top:632.68px;font-size:9px;line-height:10.8px;color:#7b8597;font-weight:400;transform:scaleX(.9);transform-origin:0 0;">20</div>
<svg class="a" style="left:583px;top:625px;" width="3" height="9" viewBox="0 0 3 9"><circle cx="1.5" cy="1" r="1" fill="#2a2f3a"/><circle cx="1.5" cy="4.5" r="1" fill="#2a2f3a"/><circle cx="1.5" cy="8" r="1" fill="#2a2f3a"/></svg>
<div class="a" style="left:611px;top:497px;width:147px;height:155px;background:#f9fbff;border-radius:6px"></div>
<div class="a" style="left:619px;top:502px;width:130px;height:109px;background:#dfebfa;border:1px solid #d3dde9;border-radius:4px"></div>
<svg class="a" style="left:655.5px;top:531.3px;" width="54.6" height="49.6" viewBox="0 0 55 50"><path d="M3.5 0H22C23.5 0 24.5 .6 25.5 1.6L30.5 8H51.5C53.5 8 55 9.5 55 11.5V46.5C55 48.5 53.5 50 51.5 50H3.5C1.5 50 0 48.5 0 46.5V3.5C0 1.5 1.5 0 3.5 0Z" fill="#035ef5"/></svg>
<div class="t" style="left:619px;top:615.08px;font-size:10.8px;line-height:12.96px;color:#30353f;font-weight:400;letter-spacing:0.38px;-webkit-text-stroke:.25px #30353f;">test</div>
<div class="t" style="left:619px;top:632.68px;font-size:9px;line-height:10.8px;color:#7b8597;font-weight:400;transform:scaleX(.85);transform-origin:0 0;">FOLDER</div>
<svg class="a" style="left:739px;top:625px;" width="3" height="9" viewBox="0 0 3 9"><circle cx="1.5" cy="1" r="1" fill="#2a2f3a"/><circle cx="1.5" cy="4.5" r="1" fill="#2a2f3a"/><circle cx="1.5" cy="8" r="1" fill="#2a2f3a"/></svg>
<div class="a" style="left:766px;top:497px;width:147px;height:155px;background:#f9fbff;border-radius:6px"></div>
<div class="a" style="left:774px;top:502px;width:130px;height:109px;background:#dfebfa;border:1px solid #d3dde9;border-radius:4px"></div>
<svg class="a" style="left:810.5px;top:531.3px;" width="54.6" height="49.6" viewBox="0 0 55 50"><path d="M3.5 0H22C23.5 0 24.5 .6 25.5 1.6L30.5 8H51.5C53.5 8 55 9.5 55 11.5V46.5C55 48.5 53.5 50 51.5 50H3.5C1.5 50 0 48.5 0 46.5V3.5C0 1.5 1.5 0 3.5 0Z" fill="#035ef5"/></svg>
<div class="t" style="left:774px;top:615.08px;font-size:10.8px;line-height:12.96px;color:#30353f;font-weight:400;letter-spacing:0.38px;-webkit-text-stroke:.25px #30353f;">Upload Box</div>
<div class="t" style="left:774px;top:632.68px;font-size:9px;line-height:10.8px;color:#7b8597;font-weight:400;transform:scaleX(.85);transform-origin:0 0;">FOLDER</div>
<div class="t" style="left:812.5px;top:632.68px;font-size:9px;line-height:10.8px;color:#7b8597;font-weight:400;">•</div>
<div class="t" style="left:823.3px;top:632.68px;font-size:9px;line-height:10.8px;color:#7b8597;font-weight:400;transform:scaleX(.9);transform-origin:0 0;">65</div>
<svg class="a" style="left:894px;top:625px;" width="3" height="9" viewBox="0 0 3 9"><circle cx="1.5" cy="1" r="1" fill="#2a2f3a"/><circle cx="1.5" cy="4.5" r="1" fill="#2a2f3a"/><circle cx="1.5" cy="8" r="1" fill="#2a2f3a"/></svg>
<div class="a" style="left:922px;top:497px;width:147px;height:155px;background:#f9fbff;border-radius:6px"></div>
<div class="a" style="left:930px;top:502px;width:130px;height:109px;background:#dfebfa;border:1px solid #d3dde9;border-radius:4px"></div>
<svg class="a" style="left:966.5px;top:531.3px;" width="54.6" height="49.6" viewBox="0 0 55 50"><path d="M3.5 0H22C23.5 0 24.5 .6 25.5 1.6L30.5 8H51.5C53.5 8 55 9.5 55 11.5V46.5C55 48.5 53.5 50 51.5 50H3.5C1.5 50 0 48.5 0 46.5V3.5C0 1.5 1.5 0 3.5 0Z" fill="#035ef5"/></svg>
<div class="t" style="left:930px;top:615.08px;font-size:10.8px;line-height:12.96px;color:#30353f;font-weight:400;letter-spacing:0.38px;-webkit-text-stroke:.25px #30353f;">Videos</div>
<div class="t" style="left:930px;top:632.68px;font-size:9px;line-height:10.8px;color:#7b8597;font-weight:400;transform:scaleX(.85);transform-origin:0 0;">FOLDER</div>
<div class="t" style="left:968.5px;top:632.68px;font-size:9px;line-height:10.8px;color:#7b8597;font-weight:400;">•</div>
<div class="t" style="left:979.3px;top:632.68px;font-size:9px;line-height:10.8px;color:#7b8597;font-weight:400;transform:scaleX(.9);transform-origin:0 0;">6</div>
<svg class="a" style="left:1050px;top:625px;" width="3" height="9" viewBox="0 0 3 9"><circle cx="1.5" cy="1" r="1" fill="#2a2f3a"/><circle cx="1.5" cy="4.5" r="1" fill="#2a2f3a"/><circle cx="1.5" cy="8" r="1" fill="#2a2f3a"/></svg>
<div class="a" style="left:1078px;top:497px;width:147px;height:155px;background:#f9fbff;border-radius:6px"></div>
<div class="a" style="left:1086px;top:502px;width:128px;height:108px;background:#fff;border:1px solid #dde3ec;border-radius:4px;overflow:hidden"><div class="a" style="left:0px;top:0px;width:128px;height:3px;background:#1d2327"></div><div class="a" style="left:4px;top:7px;width:6px;height:4px;background:#f0a58c;border-radius:2px"></div><div class="a" style="left:10px;top:7px;width:6px;height:4px;background:#3b82f6;border-radius:2px"></div><div class="a" style="left:22px;top:8px;width:18px;height:2px;background:#e6eaf0"></div><div class="a" style="left:45px;top:8px;width:15px;height:2px;background:#e6eaf0"></div><div class="a" style="left:4px;top:19px;width:40px;height:2px;background:#e3e8ef"></div><div class="a" style="left:50px;top:18px;width:4px;height:4px;background:#9fb8e0;border-radius:2px"></div><div class="a" style="left:90px;top:19px;width:10px;height:2px;background:#e3e8ef"></div><div class="a" style="left:104px;top:19px;width:14px;height:2px;background:#e3e8ef"></div><div class="a" style="left:4px;top:31px;width:12px;height:2px;background:#e3e8ef"></div><div class="a" style="left:4px;top:33px;width:18px;height:2px;background:#e6eaf0"></div><div class="a" style="left:30px;top:33px;width:14px;height:2px;background:#e6eaf0"></div><div class="a" style="left:95px;top:33px;width:14px;height:2px;background:#e6eaf0"></div><div class="a" style="left:112px;top:32px;width:5px;height:5px;background:#2563eb;border-radius:3px"></div><div class="a" style="left:3px;top:41px;width:19px;height:18px;background:#e3ebf7"></div><div class="a" style="left:6px;top:45px;width:13px;height:10px;background:#7f8389;border-radius:1px"></div><div class="a" style="left:4px;top:62px;width:12px;height:2px;background:#e6eaf0"></div><div class="a" style="left:26px;top:41px;width:19px;height:18px;background:#e3ebf7"></div><div class="a" style="left:29px;top:45px;width:13px;height:10px;background:#7f8389;border-radius:1px"></div><div class="a" style="left:27px;top:62px;width:12px;height:2px;background:#e6eaf0"></div><div class="a" style="left:49px;top:41px;width:19px;height:18px;background:#e3ebf7"></div><div class="a" style="left:52px;top:45px;width:13px;height:10px;background:#7f8389;border-radius:1px"></div><div class="a" style="left:50px;top:62px;width:12px;height:2px;background:#e6eaf0"></div><div class="a" style="left:72px;top:41px;width:19px;height:18px;background:#e3ebf7"></div><div class="a" style="left:75px;top:45px;width:13px;height:10px;background:#7f8389;border-radius:1px"></div><div class="a" style="left:73px;top:62px;width:12px;height:2px;background:#e6eaf0"></div><div class="a" style="left:95px;top:41px;width:19px;height:18px;background:#e3ebf7"></div><div class="a" style="left:98px;top:45px;width:13px;height:10px;background:#7f8389;border-radius:1px"></div><div class="a" style="left:96px;top:62px;width:12px;height:2px;background:#e6eaf0"></div><div class="a" style="left:118px;top:41px;width:19px;height:18px;background:#e3ebf7"></div><div class="a" style="left:121px;top:45px;width:13px;height:10px;background:#7f8389;border-radius:1px"></div><div class="a" style="left:119px;top:62px;width:12px;height:2px;background:#e6eaf0"></div><div class="a" style="left:3px;top:69px;width:19px;height:18px;background:#e3ebf7"></div><div class="a" style="left:6px;top:73px;width:13px;height:10px;background:#7f8389;border-radius:1px"></div><div class="a" style="left:4px;top:89px;width:12px;height:2px;background:#e6eaf0"></div><div class="a" style="left:26px;top:69px;width:19px;height:18px;background:#e3ebf7"></div><div class="a" style="left:29px;top:73px;width:13px;height:10px;background:#7f8389;border-radius:1px"></div><div class="a" style="left:27px;top:89px;width:12px;height:2px;background:#e6eaf0"></div><div class="a" style="left:49px;top:69px;width:19px;height:18px;background:#e3ebf7"></div><div class="a" style="left:52px;top:73px;width:13px;height:10px;background:#7f8389;border-radius:1px"></div><div class="a" style="left:50px;top:89px;width:12px;height:2px;background:#e6eaf0"></div><div class="a" style="left:4px;top:101px;width:6px;height:2px;background:#e6eaf0"></div><div class="a" style="left:80px;top:101px;width:14px;height:2px;background:#e6eaf0"></div></div>
<div class="t" style="left:1086px;top:615.08px;font-size:10.8px;line-height:12.96px;color:#30353f;font-weight:400;letter-spacing:0.1px;-webkit-text-stroke:.25px #30353f;">Screen Recording ...</div>
<div class="t" style="left:1086px;top:632.68px;font-size:9px;line-height:10.8px;color:#7b8597;font-weight:400;transform:scaleX(.85);transform-origin:0 0;">MP4</div>
<div class="t" style="left:1112.5px;top:632.68px;font-size:9px;line-height:10.8px;color:#7b8597;font-weight:400;">•</div>
<div class="t" style="left:1122px;top:632.68px;font-size:9px;line-height:10.8px;color:#7b8597;font-weight:400;">64 MB</div>
<svg class="a" style="left:1206px;top:625px;" width="3" height="9" viewBox="0 0 3 9"><circle cx="1.5" cy="1" r="1" fill="#2a2f3a"/><circle cx="1.5" cy="4.5" r="1" fill="#2a2f3a"/><circle cx="1.5" cy="8" r="1" fill="#2a2f3a"/></svg>
<svg class="a" style="left:752px;top:292px;" width="11" height="17" viewBox="0 0 11 17"><path d="M.8.8v13.5l3.3-3.2 2.3 5 2-.9-2.3-4.9h4.5z" fill="#111" stroke="#fff" stroke-width=".9"/></svg>
</body></html>
